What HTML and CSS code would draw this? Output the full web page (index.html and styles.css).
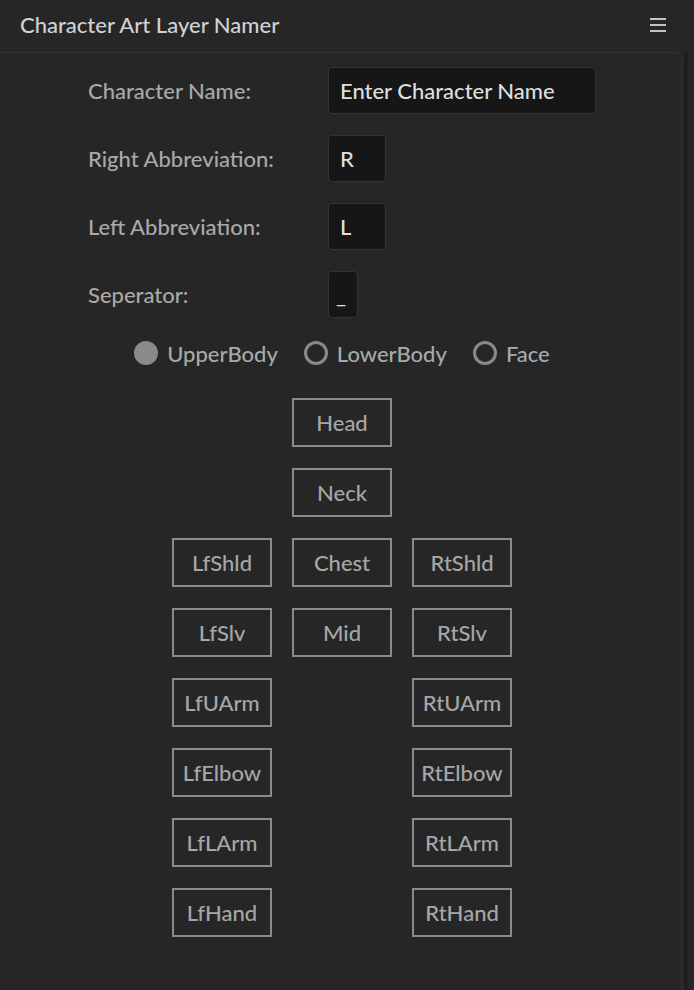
FILE: index.html
```html
<!DOCTYPE html>
<html>
<head>
<meta charset="utf-8">
<link rel="stylesheet" href="styles.css">
</head>
<body>
<div class="window">
  <header class="titlebar">
    <h1 class="title">Character Art Layer Namer</h1>
    <svg class="menu" width="16" height="14" viewBox="0 0 16 14"><rect x="0" y="0" width="16" height="2" fill="#c4c4c4"/><rect x="0" y="6" width="16" height="2" fill="#c4c4c4"/><rect x="0" y="12" width="16" height="2" fill="#c4c4c4"/></svg>
  </header>
  <div class="body">
    <main class="panel">
      <div class="form">
        <div class="row"><label class="label">Character Name:</label><div class="input wide">Enter Character Name</div></div>
        <div class="row"><label class="label">Right Abbreviation:</label><div class="input short">R</div></div>
        <div class="row"><label class="label">Left Abbreviation:</label><div class="input short">L</div></div>
        <div class="row"><label class="label">Seperator:</label><div class="input tiny">_</div></div>
      </div>
      <div class="radios">
        <div class="radio"><span class="dot checked"></span><span class="rtext">UpperBody</span></div>
        <div class="radio"><span class="dot"></span><span class="rtext">LowerBody</span></div>
        <div class="radio"><span class="dot"></span><span class="rtext">Face</span></div>
      </div>
      <div class="grid">
        <div class="btn c2">Head</div>
        <div class="btn c2">Neck</div>
        <div class="btn c1">LfShld</div><div class="btn c2">Chest</div><div class="btn c3">RtShld</div>
        <div class="btn c1">LfSlv</div><div class="btn c2">Mid</div><div class="btn c3">RtSlv</div>
        <div class="btn c1">LfUArm</div><div class="btn c3">RtUArm</div>
        <div class="btn c1">LfElbow</div><div class="btn c3">RtElbow</div>
        <div class="btn c1">LfLArm</div><div class="btn c3">RtLArm</div>
        <div class="btn c1">LfHand</div><div class="btn c3">RtHand</div>
      </div>
    </main>
    <div class="scroll"></div>
  </div>
</div>
</body>
</html>
```
FILE: styles.css
```css
* { box-sizing: border-box; }
html, body { margin: 0; padding: 0; background: #262626; height: 100%; overflow: hidden; }
body { font-family: Lato, "Noto Sans", sans-serif; color: #a8a8a8; font-weight: 500; }
.window { display: flex; flex-direction: column; height: 990px; }
.titlebar { height: 52px; display: flex; align-items: center; justify-content: space-between; padding: 0 28px 4px 20px; }
.title { margin: 0; font-size: 22px; font-weight: 500; color: #d2d2d2; }
.menu { display: block; margin-top: 1px; }
.body { flex: 1; display: flex; }
.panel { width: 686px; margin-left: -4px; border: 1px solid #313131; border-bottom: none; border-radius: 5px 5px 0 0; padding: 14px 0 0 0; }
.scroll { width: 4px; margin-left: 2px; background: #1e1e1e; }
.form { display: flex; flex-direction: column; gap: 21px; padding-left: 91px; }
.row { display: flex; align-items: center; height: 47px; }
.label { width: 240px; font-size: 22px; color: #a9a9a9; padding-bottom: 1px; }
.input { height: 47px; background: #161616; border: 1px solid #343434; border-radius: 4px; color: #dedede; font-size: 22px; display: flex; align-items: center; padding-left: 11px; }
.wide { width: 268px; }
.short { width: 58px; }
.tiny { width: 30px; padding-left: 7px; }
.radios { display: flex; justify-content: center; gap: 26px; margin-top: 20px; height: 30px; align-items: center; margin-left: 6px; }
.radio { display: flex; align-items: center; gap: 9px; font-size: 22px; color: #a9a9a9; }
.dot { width: 24px; height: 24px; border-radius: 50%; border: 3px solid #8a8a8a; display: block; }
.dot.checked { background: #8a8a8a; }
.grid { display: grid; grid-template-columns: 100px 100px 100px; column-gap: 20px; row-gap: 21px; justify-content: center; margin-top: 30px; margin-left: 6px; }
.btn { height: 49px; border: 2px solid #8a8a8a; display: flex; align-items: center; justify-content: center; font-size: 22px; color: #a6a6a6; }
.c1 { grid-column: 1; }
.c2 { grid-column: 2; }
.c3 { grid-column: 3; }
```
